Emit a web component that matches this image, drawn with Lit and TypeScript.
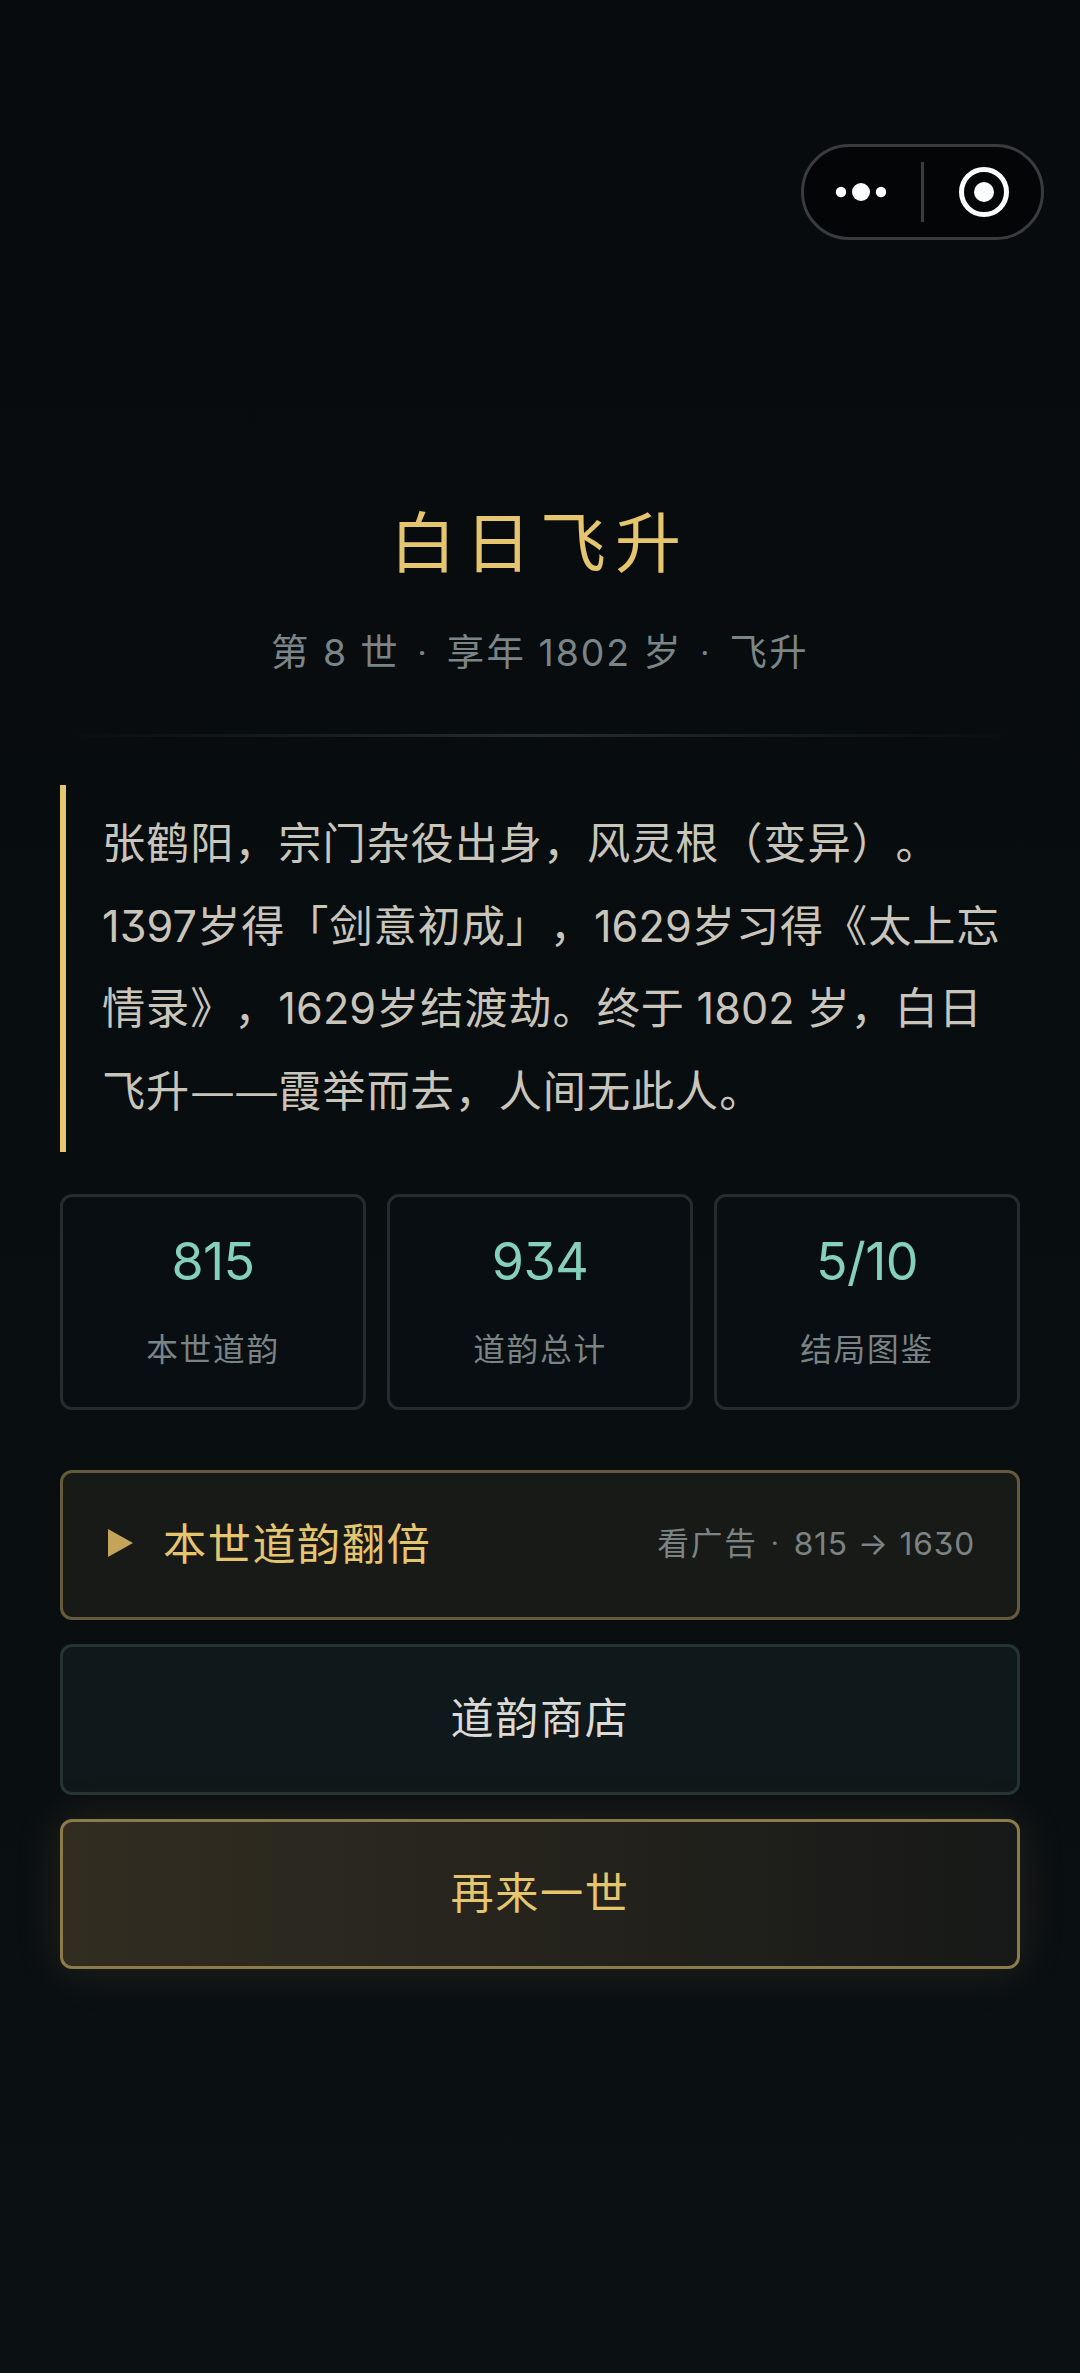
import { LitElement, html, css, svg } from "lit";
import { customElement, property } from "lit/decorators.js";

const classFor = (part: string) =>
  /^[0-9/]+$/.test(part) ? "num" : part === "→" ? "arrow" : part === "·" ? "dot" : part === "—" ? "dash" : "";

/* Wraps digits, arrows, middle dots and dashes so that each gets its own face and spacing. */
const mixed = (text: string) =>
  text.split(/([0-9/]+|→|·|—)/).map((part) => {
    const cls = classFor(part);
    return cls ? html`<span class=${cls}>${part}</span>` : part;
  });

const numerals = css`
  .num {
    font-family: Inter, Roboto, sans-serif;
    font-feature-settings: "cv09" 1;
    line-height: 1;
    letter-spacing: var(--num-spacing, 0);
  }
  .arrow {
    font-family: Inter, "Noto Sans CJK SC", sans-serif;
    line-height: 1;
  }
  .dot {
    font-family: Roboto, sans-serif;
    line-height: 1;
    margin: 0 var(--dot-margin, 0);
  }
  .dash {
    display: inline-block;
    width: 44.06px;
    letter-spacing: 0;
    transform: scaleX(1.17);
    transform-origin: left;
  }
`;

@customElement("menu-capsule")
class MenuCapsule extends LitElement {
  static styles = css`
    :host {
      display: block;
      box-sizing: border-box;
      width: 243px;
      height: 96px;
      border: 3px solid #3a3b3c;
      border-radius: 48px;
      background: #040507;
    }
    svg {
      display: block;
    }
  `;
  render() {
    return html`<svg width="237" height="90" viewBox="0 0 237 90">
      ${svg`
        <circle cx="37" cy="45" r="5.2" fill="#fff"/>
        <circle cx="57" cy="45" r="9" fill="#fff"/>
        <circle cx="77" cy="45" r="5.2" fill="#fff"/>
        <rect x="117" y="15" width="3" height="60" fill="#3a3b3c"/>
        <circle cx="180" cy="45" r="22.5" fill="none" stroke="#fff" stroke-width="5"/>
        <circle cx="180" cy="45" r="10" fill="#fff"/>
      `}
    </svg>`;
  }
}

@customElement("stat-card")
class StatCard extends LitElement {
  @property() value = "";
  @property() label = "";
  static styles = [
    numerals,
    css`
      :host {
        display: flex;
        flex-direction: column;
        align-items: center;
        box-sizing: border-box;
        height: 216px;
        padding-top: 31px;
        border: 3px solid #252c2e;
        border-radius: 12px;
        background: #080e11;
      }
      .value {
        height: 60px;
        line-height: 60px;
        font-size: 52px;
        color: #85cfbd;
        --num-spacing: -0.6px;
      }
      .label {
        margin-top: 35px;
        line-height: 48px;
        font-size: 31.7px;
        letter-spacing: 1.7px;
        color: #7b8485;
      }
    `,
  ];
  render() {
    return html`
      <div class="value">${mixed(this.value)}</div>
      <div class="label">${this.label}</div>
    `;
  }
}

@customElement("app-root")
class AppRoot extends LitElement {
  private stats = [
    { value: "815", label: "本世道韵" },
    { value: "934", label: "道韵总计" },
    { value: "5/10", label: "结局图鉴" },
  ];

  private story = [
    "张鹤阳，宗门杂役出身，风灵根（变异）。",
    "1397岁得「剑意初成」，1629岁习得《太上忘",
    "情录》，1629岁结渡劫。终于 1802 岁，白日",
    "飞升——霞举而去，人间无此人。",
  ];

  static styles = [
    numerals,
    css`
      :host {
        display: flex;
        flex-direction: column;
        box-sizing: border-box;
        width: 1080px;
        height: 2373px;
        padding: 144px 60px 0;
        overflow: hidden;
        background: linear-gradient(180deg, #070b0e 0%, #080d10 50%, #0b1013 100%);
        font-family: "Noto Sans CJK SC", sans-serif;
        text-spacing-trim: space-all;
        white-space: pre;
      }
      menu-capsule {
        align-self: flex-end;
        margin-right: -24px;
      }
      .title {
        margin-top: 252px;
        line-height: 92px;
        font-size: 66px;
        letter-spacing: 9px;
        text-align: center;
        color: #e6c56f;
      }
      .subtitle {
        margin-top: 39px;
        line-height: 54px;
        font-size: 37.4px;
        letter-spacing: 2.4px;
        word-spacing: 1.5px;
        text-align: center;
        color: #7b8587;
        --num-spacing: 1.9px;
        --dot-margin: 4.9px;
      }
      .rule {
        margin-top: 57px;
        height: 3px;
        background: linear-gradient(90deg, transparent, #252c2e 50%, transparent);
      }
      .story {
        box-sizing: border-box;
        height: 367px;
        margin-top: 48px;
        padding: 14px 0 0 36px;
        border-left: 6px solid #e6c56f;
        font-size: 43.2px;
        letter-spacing: 0.9px;
        word-spacing: 1.1px;
        color: #c9c5bb;
        --num-spacing: 0.1px;
      }
      .line {
        height: 82.5px;
        line-height: 82.5px;
      }
      .stats {
        display: grid;
        grid-template-columns: repeat(3, 1fr);
        gap: 21px;
        margin-top: 42px;
      }
      .actions {
        display: flex;
        flex-direction: column;
        gap: 24.2px;
        margin-top: 60px;
      }
      .button {
        display: flex;
        align-items: center;
        justify-content: center;
        box-sizing: border-box;
        height: 150.3px;
        border: 3px solid;
        border-radius: 12px;
        padding-bottom: 9px;
        font-size: 43.2px;
        letter-spacing: 1.5px;
      }
      .double {
        justify-content: flex-start;
        padding-left: 45px;
        padding-right: 42px;
        border-color: #655a3a;
        background: #181a17;
        color: #e6c56f;
      }
      .play {
        display: block;
        margin-top: 5px;
        margin-right: 29px;
      }
      .hint {
        margin-left: auto;
        font-size: 31.7px;
        letter-spacing: 1.9px;
        word-spacing: 0.8px;
        color: #7b8485;
        --num-spacing: 0.8px;
        --dot-margin: 3px;
      }
      .shop {
        border-color: #263335;
        background: #0f181a;
        color: #dcdad4;
      }
      .again {
        border-color: #8b7a4a;
        background: linear-gradient(90deg, #322d21, #171918);
        box-shadow: 0 0 48px rgba(230, 197, 111, 0.12);
        color: #e6c56f;
      }
    `,
  ];

  render() {
    return html`<menu-capsule></menu-capsule
      ><div class="title">白日飞升</div
      ><div class="subtitle">${mixed("第 8 世 · 享年 1802 岁 · 飞升")}</div
      ><div class="rule"></div
      ><div class="story">${this.story.map((l) => html`<div class="line">${mixed(l)}</div>`)}</div
      ><div class="stats">${this.stats.map(
        (s) => html`<stat-card .value=${s.value} .label=${s.label}></stat-card>`
      )}</div
      ><div class="actions"
        ><div class="button double"
          ><svg class="play" width="26" height="28" viewBox="0 0 26 28"
            ><path d="M0 0 L25 14 L0 28 Z" fill="#c4a459"></path></svg
          ><span>本世道韵翻倍</span
          ><span class="hint">${mixed("看广告 · 815 → 1630")}</span
        ></div
        ><div class="button shop">道韵商店</div
        ><div class="button again">再来一世</div
      ></div>`;
  }
}
